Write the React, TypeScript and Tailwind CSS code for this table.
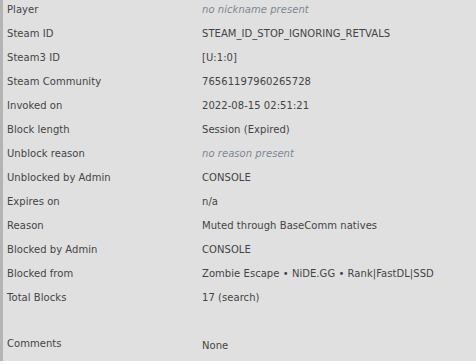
import React from "react";

type Row = { label: string; value: string; muted?: boolean };

const rows: Row[] = [
  { label: "Player", value: "no nickname present", muted: true },
  { label: "Steam ID", value: "STEAM_ID_STOP_IGNORING_RETVALS" },
  { label: "Steam3 ID", value: "[U:1:0]" },
  { label: "Steam Community", value: "76561197960265728" },
  { label: "Invoked on", value: "2022-08-15 02:51:21" },
  { label: "Block length", value: "Session (Expired)" },
  { label: "Unblock reason", value: "no reason present", muted: true },
  { label: "Unblocked by Admin", value: "CONSOLE" },
  { label: "Expires on", value: "n/a" },
  { label: "Reason", value: "Muted through BaseComm natives" },
  { label: "Blocked by Admin", value: "CONSOLE" },
  { label: "Blocked from", value: "Zombie Escape • NiDE.GG • Rank|FastDL|SSD" },
  { label: "Total Blocks", value: "17 (search)" },
];

export default function App() {
  return (
    <div className="min-h-screen bg-[#e0e0e0] border-l-[3px] border-[#b4b4b4] text-[#444] text-[10px] tracking-[0.05px] font-['DejaVu_Sans',Verdana,sans-serif]">
      <div className="-mt-[3px]">
        {rows.map((r) => (
          <div key={r.label} className="flex items-center h-6">
            <div className="w-[199px] pl-1">{r.label}</div>
            <div className={r.muted ? "italic text-[#7d8792]" : ""}>{r.value}</div>
          </div>
        ))}
        <div className="h-[22px]" />
        {/* comments row */}
        <div className="flex items-center h-6">
          <div className="w-[199px] pl-1">Comments</div>
          <div className="pt-1">None</div>
        </div>
      </div>
    </div>
  );
}
